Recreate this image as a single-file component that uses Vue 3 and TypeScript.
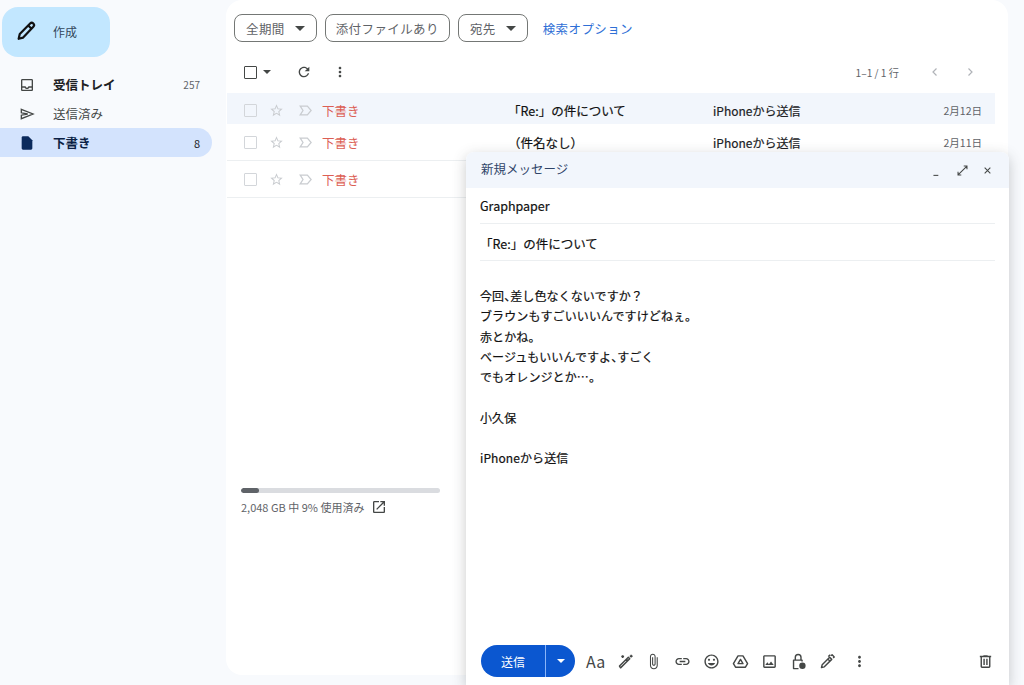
<script setup lang="ts">
interface Row {
  subject: string
  date: string
  active?: boolean
}

const rows: Row[] = [
  { subject: '「Re:」の件について', date: '2月12日', active: true },
  { subject: '\uFF08件名なし\uFF09', date: '2月11日' },
  { subject: '', date: '' },
]

const bodyLines = [
  '今回、差し色なくないですか\uFF1F',
  'ブラウンもすごいいいんですけどねぇ。',
  '赤とかね。',
  'ベージュもいいんですよ、すごく',
  'でもオレンジとか…。',
  '',
  '小久保',
  '',
  'iPhoneから送信',
]

const star =
  'M22 9.24l-7.19-.62L12 2 9.19 8.63 2 9.24l5.46 4.73L5.82 21 12 17.27 18.18 21l-1.63-7.03L22 9.24zM12 15.4l-3.76 2.27 1-4.28-3.32-2.88 4.38-.38L12 6.1l1.71 4.04 4.38.38-3.32 2.88 1 4.28L12 15.4z'
const dots =
  'M12 8c1.1 0 2-.9 2-2s-.9-2-2-2-2 .9-2 2 .9 2 2 2zm0 2c-1.1 0-2 .9-2 2s.9 2 2 2 2-.9 2-2-.9-2-2-2zm0 6c-1.1 0-2 .9-2 2s.9 2 2 2 2-.9 2-2-.9-2-2-2z'
</script>

<template>
  <div class="page" lang="ja">
    <aside class="sidebar">
      <button class="compose-btn">
        <svg class="compose-icon" viewBox="0 0 24 24">
          <path d="M4 20.500l1.200-5.300L16.500 3.900a2.300 2.300 0 0 1 3.500 3.500L8.900 19.200zM14.500 6l3.500 3.500" />
        </svg>
        <span>作成</span>
      </button>
      <nav class="nav">
        <div class="nav-item bold">
          <svg viewBox="0 0 24 24"><path d="M19 3H5c-1.1 0-2 .9-2 2v14c0 1.1.9 2 2 2h14c1.1 0 2-.9 2-2V5c0-1.1-.9-2-2-2zm0 16H5v-3h3.56c.69 1.19 1.97 2 3.45 2s2.75-.81 3.45-2H19v3zm0-5h-4.99c0 1.1-.9 2-2 2s-2-.9-2-2H5V5h14v9z" /></svg>
          <span class="nav-label">受信トレイ</span>
          <span class="nav-count">257</span>
        </div>
        <div class="nav-item">
          <svg class="send-icon" viewBox="0 0 24 24"><path d="M3.500 5L21 12 3.500 19v-5.200L13 12 3.500 10.200z" /></svg>
          <span class="nav-label">送信済み</span>
        </div>
        <div class="nav-item selected">
          <svg viewBox="0 0 24 24"><path d="M14 2H6c-1.1 0-2 .9-2 2v16c0 1.1.9 2 2 2h12c1.1 0 2-.9 2-2V8l-6-6z" /></svg>
          <span class="nav-label">下書き</span>
          <span class="nav-count">8</span>
        </div>
      </nav>
    </aside>

    <main class="panel">
      <div class="filters">
        <div class="chip">全期間<i class="caret"></i></div>
        <div class="chip plain">添付ファイルあり</div>
        <div class="chip">宛先<i class="caret"></i></div>
        <a class="search-options">検索オプション</a>
      </div>

      <div class="toolbar">
        <span class="tool-check"></span>
        <i class="caret small"></i>
        <svg class="tool-refresh" viewBox="0 0 24 24"><path d="M17.65 6.35C16.2 4.9 14.21 4 12 4c-4.42 0-7.99 3.58-7.99 8s3.57 8 7.99 8c3.73 0 6.84-2.55 7.73-6h-2.08c-.82 2.33-3.04 4-5.65 4-3.31 0-6-2.69-6-6s2.69-6 6-6c1.66 0 3.14.69 4.22 1.78L13 11h7V4l-2.35 2.35z" /></svg>
        <svg class="tool-more" viewBox="0 0 24 24"><path :d="dots" /></svg>
        <span class="pager">1–1 / 1 行</span>
        <svg class="chev" viewBox="0 0 24 24"><path d="M15 5l-7 7 7 7" /></svg>
        <svg class="chev" viewBox="0 0 24 24"><path d="M9 5l7 7-7 7" /></svg>
      </div>

      <div class="list">
        <div v-for="(row, i) in rows" :key="i" class="row" :class="{ active: row.active }">
          <span class="row-check"></span>
          <svg class="row-icon" viewBox="0 0 24 24"><path :d="star" /></svg>
          <svg class="row-icon label" viewBox="0 0 24 24"><path d="M3.500 5H15l6 7-6 7H3.500L8 12z" /></svg>
          <span class="row-from">下書き</span>
          <span class="row-subject">{{ row.subject }}</span>
          <span class="row-snippet">{{ row.date ? 'iPhoneから送信' : '' }}</span>
          <span class="row-date">{{ row.date }}</span>
        </div>
      </div>

      <div class="storage">
        <div class="storage-bar"><div class="storage-fill"></div></div>
        <div class="storage-text">
          <span>2,048 GB 中 9% 使用済み</span>
          <svg viewBox="0 0 24 24"><path d="M19 19H5V5h7V3H5c-1.11 0-2 .9-2 2v14c0 1.1.89 2 2 2h14c1.1 0 2-.9 2-2v-7h-2v7zM14 3v2h3.59l-9.83 9.83 1.41 1.41L19 6.41V10h2V3h-7z" /></svg>
        </div>
      </div>
    </main>

    <section class="composer">
      <header class="composer-head">
        <span class="composer-title">新規メッセージ</span>
        <svg class="head-icon" viewBox="0 0 16 16"><path d="M3 14h6" /></svg>
        <svg class="head-icon" viewBox="0 0 16 16"><path d="M2.500 13.500l11-11M9.500 2.500h4v4M2.500 9.500v4h4" /></svg>
        <svg class="head-icon" viewBox="0 0 16 16"><path d="M4.500 4.500l7 7M11.500 4.500l-7 7" /></svg>
      </header>
      <div class="composer-field">Graphpaper</div>
      <div class="composer-field subject">「Re:」の件について</div>
      <div class="composer-body">
        <div v-for="(line, i) in bodyLines" :key="i" class="body-line">
          <template v-for="(part, j) in line.split('、')" :key="j"><span v-if="j" class="touten">、</span>{{ part }}</template>
        </div>
      </div>
      <footer class="composer-foot">
        <div class="send">
          <span class="send-label">送信</span>
          <span class="send-more"><i class="caret white"></i></span>
        </div>
        <span class="fmt">Aa</span>
        <svg class="foot-icon line" viewBox="0 0 24 24"><path d="M5 21L18 8l-2-2L3.500 18.500zM13.500 8.500l2 2M20 2.500v4M18 4.500h4M8 3v4M6 5h4" /></svg>
        <svg class="foot-icon clip" viewBox="0 0 24 24"><path d="M16.500 6v11.500c0 2.210-1.790 4-4 4s-4-1.790-4-4V5c0-1.380 1.120-2.500 2.500-2.500s2.500 1.120 2.500 2.500v10.500c0 .55-.45 1-1 1s-1-.45-1-1V6H10v9.500c0 1.380 1.120 2.500 2.500 2.500s2.500-1.120 2.500-2.500V5c0-2.210-1.790-4-4-4S7 2.790 7 5v12.500c0 3.040 2.460 5.500 5.500 5.500s5.500-2.460 5.500-5.500V6h-1.500z" /></svg>
        <svg class="foot-icon" viewBox="0 0 24 24"><path d="M3.900 12c0-1.710 1.390-3.100 3.100-3.100h4V7H7c-2.760 0-5 2.240-5 5s2.240 5 5 5h4v-1.900H7c-1.710 0-3.100-1.390-3.100-3.100zM8 13h8v-2H8v2zm9-6h-4v1.900h4c1.710 0 3.100 1.390 3.100 3.100s-1.390 3.100-3.100 3.100h-4V17h4c2.760 0 5-2.240 5-5s-2.240-5-5-5z" /></svg>
        <svg class="foot-icon" viewBox="0 0 24 24"><path d="M11.990 2C6.470 2 2 6.480 2 12s4.470 10 9.990 10C17.520 22 22 17.520 22 12S17.520 2 11.990 2zM12 20c-4.420 0-8-3.580-8-8s3.580-8 8-8 8 3.580 8 8-3.580 8-8 8zm3.500-9c.83 0 1.500-.67 1.500-1.500S16.330 8 15.500 8 14 8.670 14 9.500s.67 1.500 1.500 1.500zm-7 0c.83 0 1.500-.67 1.500-1.500S9.330 8 8.500 8 7 8.670 7 9.500 7.670 11 8.500 11zm3.500 6.500c2.330 0 4.310-1.460 5.110-3.500H6.890c.8 2.040 2.780 3.500 5.110 3.500z" /></svg>
        <svg class="foot-icon line" viewBox="0 0 24 24"><path d="M8.500 4h7L22 15l-3 5H5l-3-5zM12 9l-3.500 6h7z" /></svg>
        <svg class="foot-icon" viewBox="0 0 24 24"><path d="M19 5v14H5V5h14m0-2H5c-1.100 0-2 .9-2 2v14c0 1.100.9 2 2 2h14c1.100 0 2-.9 2-2V5c0-1.100-.9-2-2-2zm-4.860 8.860l-3 3.870L9 13.140 6 17h12l-3.860-5.140z" /></svg>
        <svg class="foot-icon line" viewBox="0 0 24 24"><path d="M12 22H5V10h12v2M7.500 10V6a4 4 0 0 1 8 0v4" /><circle class="solid" cx="17.500" cy="18" r="4.500" /></svg>
        <svg class="foot-icon line" viewBox="0 0 24 24"><path d="M3.500 20.500l1-4L15 6l3 3L7.500 19.500zM12.500 8.500l3 3M17 4l1.500-1.500 3 3L20 7M13 5l3-2.500" /></svg>
        <svg class="foot-icon dots-icon" viewBox="0 0 24 24"><path :d="dots" /></svg>
        <svg class="foot-icon trash" viewBox="0 0 24 24"><path d="M15 4V3H9v1H4v2h1v13c0 1.100.9 2 2 2h10c1.100 0 2-.9 2-2V6h1V4h-5zm2 15H7V6h10v13zM9 8h2v9H9zm4 0h2v9h-2z" /></svg>
      </footer>
    </section>
  </div>
</template>

<style>
body {
  background: #f8fafd;
}
</style>

<style scoped>
.page {
  position: relative;
  display: flex;
  width: 1024px;
  height: 685px;
  overflow: hidden;
  background: #f8fafd;
  color: #202124;
  font-family: 'Noto Sans CJK JP', 'Noto Sans', sans-serif;
  font-size: 12px;
}

.caret {
  display: inline-block;
  width: 0;
  height: 0;
  border-left: 5px solid transparent;
  border-right: 5px solid transparent;
  border-top: 5px solid #444746;

  &.small {
    border-width: 4px 4px 0;
    margin-left: 6px;
  }

  &.white {
    border-width: 4px 4px 0;
    border-top-color: #fff;
  }
}

.sidebar {
  flex: 0 0 226px;
  padding-top: 7px;
  box-sizing: border-box;
}

.compose-btn {
  display: flex;
  align-items: center;
  width: 108px;
  height: 50px;
  margin-left: 2px;
  padding: 0 0 0 13px;
  border: none;
  border-radius: 16px;
  background: #c2e7ff;
  color: #33475b;
  font: inherit;

  span {
    margin: 0 0 2px 16px;
  }
}

.compose-icon {
  width: 22px;
  height: 22px;
  margin-bottom: 2px;
  fill: none;
  stroke: #111;
  stroke-width: 2.400;
  stroke-linejoin: round;
}

.nav {
  margin-top: 13px;
}

.nav-item {
  display: flex;
  align-items: center;
  width: 212px;
  height: 29px;
  padding: 0 12px 0 19px;
  box-sizing: border-box;
  border-radius: 0 15px 15px 0;
  color: #444746;
  font-size: 12.500px;

  svg {
    width: 16px;
    height: 16px;
    fill: #444746;
  }

  .send-icon {
    fill: none;
    stroke: #444746;
    stroke-width: 2;
  }

  &.bold .nav-label {
    font-weight: 700;
    color: #202124;
  }

  &.selected {
    background: #d3e3fd;
    color: #0b1f44;
    font-weight: 700;

    svg {
      fill: #0b2a5c;
    }

    .nav-count {
      color: #202124;
      font-size: 11px;
      font-weight: 400;
    }
  }
}

.nav-label {
  margin-left: 18px;
}

.nav-count {
  margin-left: auto;
  font-size: 10px;
  color: #5f6368;
}

.panel {
  flex: 0 0 782px;
  height: 675px;
  background: #fff;
  border-radius: 16px;
  box-sizing: border-box;
  padding-top: 14px;
}

.filters {
  display: flex;
  align-items: center;
  gap: 8px;
  height: 28px;
  padding-left: 8px;
}

.chip {
  display: flex;
  align-items: center;
  gap: 10px;
  height: 100%;
  padding: 0 11px;
  box-sizing: border-box;
  border: 1px solid #747775;
  border-radius: 8px;
  font-size: 12.500px;
  letter-spacing: 0.4px;
  color: #5f6368;

  &.plain {
    padding: 0 10px;
  }
}

.search-options {
  margin-left: 7px;
  font-size: 12.500px;
  letter-spacing: 0.4px;
  color: #2f6fd6;
}

.toolbar {
  display: flex;
  align-items: center;
  height: 51px;
  box-sizing: border-box;
  padding: 9px 0 0 18px;
}

.tool-check {
  width: 11px;
  height: 11px;
  border: 1.500px solid #444746;
  border-radius: 1px;
}

.tool-refresh {
  width: 16px;
  height: 16px;
  margin-left: 25px;
  fill: #444746;
}

.tool-more {
  width: 16px;
  height: 16px;
  margin-left: 20px;
  fill: #444746;
}

.pager {
  margin-left: auto;
  margin-right: 30px;
  font-size: 10.200px;
  color: #5f6368;
}

.chev {
  width: 12px;
  height: 12px;
  fill: none;
  stroke: #b0b3b8;
  stroke-width: 2.400;
  margin-right: 23px;

  &:last-child {
    margin-right: 32px;
  }
}

.list {
  width: 768px;
  margin-left: 1px;
}

.row {
  display: flex;
  align-items: center;
  height: 37px;
  border-bottom: 1px solid #eceff1;
  box-sizing: border-box;
  padding-left: 17px;

  &.active {
    height: 31px;
    padding-top: 4px;
    background: #f2f6fc;
    border-bottom: none;
  }
}

.row-check {
  width: 11px;
  height: 11px;
  border: 1.500px solid #d3d6da;
  border-radius: 1px;
  flex: none;
}

.row-icon {
  flex: none;
  width: 15px;
  height: 15px;
  margin-left: 12px;
  fill: #c9ccd0;

  &.label {
    margin-left: 14px;
    fill: none;
    stroke: #c9ccd0;
    stroke-width: 2;
  }
}

.row-from {
  flex: none;
  width: 186px;
  margin-left: 9px;
  font-size: 12.500px;
  color: #dc5f55;
}

.row-subject {
  flex: none;
  width: 205px;
  font-size: 12.500px;
  color: #111;
  -webkit-text-stroke: 0.2px #111;
}

.row-snippet {
  flex: 1;
  font-size: 12px;
  color: #202124;
  -webkit-text-stroke: 0.2px #202124;
}

.row-date {
  margin-right: 13px;
  font-size: 10.500px;
  color: #5f6368;
}

.storage {
  width: 199px;
  margin: 290px 0 0 15px;
}

.storage-bar {
  height: 5px;
  border-radius: 3px;
  background: #dadce0;
  overflow: hidden;
}

.storage-fill {
  width: 18px;
  height: 100%;
  border-radius: 3px;
  background: #5f6368;
}

.storage-text {
  display: flex;
  align-items: center;
  margin-top: 6px;
  width: 240px;
  font-size: 11px;
  color: #5f6368;

  svg {
    width: 16px;
    height: 16px;
    margin-left: 7px;
    fill: #444746;
  }
}

.composer {
  position: absolute;
  left: 466px;
  top: 152px;
  display: flex;
  flex-direction: column;
  width: 543px;
  height: 533px;
  background: #fff;
  border-radius: 8px 8px 0 0;
  box-shadow: 0 4px 14px rgba(60, 64, 67, 0.28);
}

.composer-head {
  display: flex;
  align-items: center;
  height: 36px;
  flex: none;
  padding: 0 15px 0 15px;
  box-sizing: border-box;
  background: #f2f6fc;
  border-radius: 8px 8px 0 0;
}

.composer-title {
  margin: 0 auto 3px 0;
  font-size: 12.500px;
  color: #2f4468;
}

.head-icon {
  width: 13px;
  height: 13px;
  margin-left: 12px;
  fill: none;
  stroke: #444746;
  stroke-width: 1.300;
}

.composer-field {
  display: flex;
  align-items: center;
  flex: none;
  height: 35px;
  margin: 0 14px;
  border-bottom: 1px solid #eceff1;
  font-size: 12.500px;
  color: #111;
  -webkit-text-stroke: 0.2px #111;

  &.subject {
    height: 37px;
    padding-top: 2px;
    box-sizing: border-box;
  }
}

.composer-body {
  flex: 1;
  padding: 25px 14px 0;
}

.body-line {
  height: 20.300px;
  line-height: 20.300px;
  font-size: 12px;
  letter-spacing: 0.100px;
  color: #111;
  -webkit-text-stroke: 0.2px #111;
}

.touten {
  letter-spacing: -6px;
}

.composer-foot {
  display: flex;
  align-items: center;
  flex: none;
  height: 32px;
  margin-bottom: 8px;
  padding: 0 15px;
}

.send {
  display: flex;
  flex: none;
  width: 94px;
  height: 32px;
  border-radius: 16px;
  background: #0b57d0;
  color: #fff;
  overflow: hidden;
}

.send-label {
  display: flex;
  align-items: center;
  justify-content: center;
  width: 64px;
  border-right: 1px solid #8ab4f8;
}

.send-more {
  display: flex;
  align-items: center;
  justify-content: center;
  flex: 1;
}

.fmt {
  width: 19px;
  margin-left: 11px;
  font-size: 16px;
  color: #444746;
}

.foot-icon {
  flex: none;
  width: 17px;
  height: 17px;
  margin-left: 12px;
  fill: #444746;

  &.line {
    fill: none;
    stroke: #444746;
    stroke-width: 2;
    stroke-linejoin: round;
  }

  .solid {
    fill: #444746;
    stroke: none;
  }

  &.clip {
    margin-left: 11px;
  }

  &.dots-icon {
    margin-left: 15px;
  }

  &.trash {
    margin-left: auto;
  }
}
</style>
